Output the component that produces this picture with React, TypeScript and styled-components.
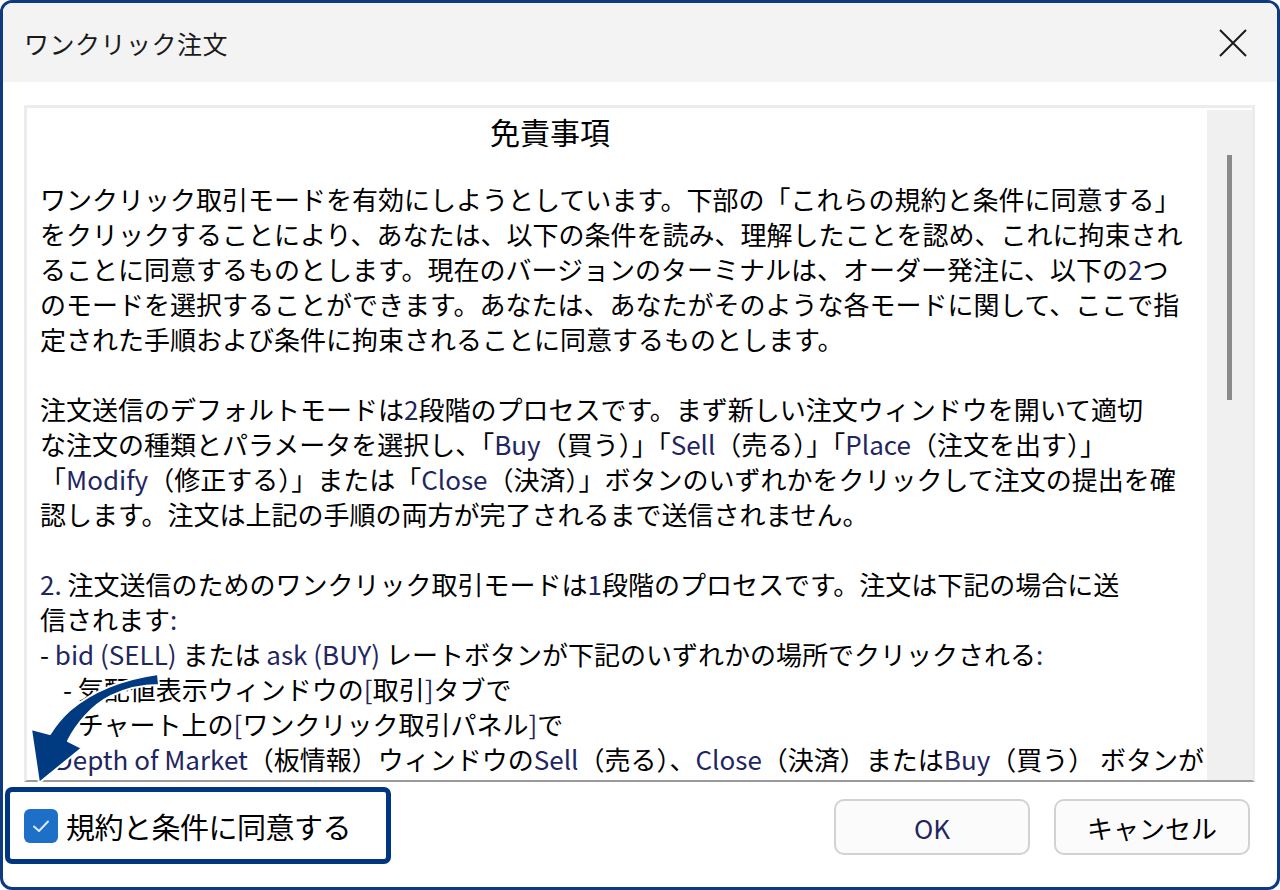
import React from "react";
import styled, { createGlobalStyle } from "styled-components";

const Global = createGlobalStyle`
  html, body { margin: 0; padding: 0; background: #ffffff; }
  body { font-family: "Noto Sans CJK JP", "Noto Sans", sans-serif; }
  * { box-sizing: border-box; }
`;

const Page = styled.div`
  position: relative;
  width: 1280px;
  height: 890px;
`;

const Window = styled.div`
  width: 1280px;
  height: 890px;
  border: 3px solid #0d3a80;
  border-radius: 12px;
  overflow: hidden;
  background: #ffffff;
  display: flex;
  flex-direction: column;
`;

const TitleBar = styled.div`
  height: 79px;
  flex: none;
  background: #f3f3f3;
  display: flex;
  align-items: center;
  justify-content: space-between;
  padding: 0 28px 0 21px;
`;

const Title = styled.div`
  font-family: "Noto Sans CJK JP", sans-serif;
  font-size: 25px;
  color: #1a1a1a;
  letter-spacing: 0.5px;
`;

const CloseButton = styled.div`
  width: 32px;
  height: 32px;
  display: flex;
  align-items: center;
  justify-content: center;
`;

const TextBox = styled.div`
  flex: none;
  margin: 23px 22px 0 21px;
  height: 677px;
  border-top: 3px solid #ececec;
  border-left: 3px solid #ececec;
  border-right: 3px solid #ececec;
  border-bottom: 2px solid #9a9a9a;
  display: flex;
  overflow: hidden;
`;

const TextArea = styled.div`
  flex: 1;
  overflow: hidden;
  padding: 6px 0 0 13px;
  font-family: "Noto Sans CJK JP", sans-serif;
  font-size: 26px;
  line-height: 35px;
  color: #000000;
`;

const Heading = styled.div`
  padding-left: 450px;
  margin-bottom: 32px;
  white-space: nowrap;
  font-size: 30px;
`;

const Line = styled.div<{ $indent?: number }>`
  white-space: nowrap;
  height: 35px;
  padding-left: ${(p) => p.$indent ?? 0}px;
`;

const Blank = styled.div`
  height: 35px;
`;

const Latin = styled.span`
  color: #1f2660;
`;

const ScrollBar = styled.div`
  width: 45px;
  flex: none;
  margin-top: 2px;
  background: #f0f0f0;
  display: flex;
  justify-content: center;
  padding-top: 45px;
`;

const Thumb = styled.div`
  width: 5px;
  height: 245px;
  background: #8a8a8a;
`;

const Footer = styled.div`
  flex: 1;
  display: flex;
  align-items: flex-start;
  padding: 5px 27px 0 2px;
`;

const AgreeBox = styled.div`
  width: 386px;
  height: 77px;
  border: 5px solid #003580;
  border-radius: 7px;
  display: flex;
  align-items: center;
  padding-left: 14px;
  gap: 8px;
`;

const Check = styled.div`
  width: 34px;
  height: 34px;
  border-radius: 6px;
  background: #1d6fc7;
  display: flex;
  align-items: center;
  justify-content: center;
`;

const AgreeLabel = styled.div`
  font-family: "Noto Sans CJK JP", sans-serif;
  font-size: 29px;
  line-height: 36px;
  color: #000000;
  white-space: nowrap;
  letter-spacing: -0.5px;
`;

const Buttons = styled.div`
  margin-left: auto;
  margin-top: 12px;
  display: flex;
  gap: 24px;
`;

const Button = styled.div<{ $w: number }>`
  width: ${(p) => p.$w}px;
  height: 56px;
  border: 2px solid #d2d2d2;
  border-radius: 10px;
  background: #fbfbfb;
  display: flex;
  align-items: center;
  justify-content: center;
  font-family: "Noto Sans CJK JP", sans-serif;
  font-size: 26px;
  color: #000000;
`;

const ArrowSvg = styled.svg`
  position: absolute;
  left: 0;
  top: 660px;
  width: 180px;
  height: 140px;
  pointer-events: none;
`;

const LATIN_RE = /([A-Za-z0-9.:\[\]()]+(?: [A-Za-z0-9.:\[\]()]+)*)/;

function T({ s }: { s: string }) {
  const parts = s.split(LATIN_RE);
  return (
    <>
      {parts.map((p, i) =>
        i % 2 === 1 ? <Latin key={i}>{p}</Latin> : <React.Fragment key={i}>{p}</React.Fragment>
      )}
    </>
  );
}

type L = { t: string; indent?: number } | null;

const lines: L[] = [
  { t: "ワンクリック取引モードを有効にしようとしています。下部の「これらの規約と条件に同意する」" },
  { t: "をクリックすることにより、あなたは、以下の条件を読み、理解したことを認め、これに拘束され" },
  { t: "ることに同意するものとします。現在のバージョンのターミナルは、オーダー発注に、以下の2つ" },
  { t: "のモードを選択することができます。あなたは、あなたがそのような各モードに関して、ここで指" },
  { t: "定された手順および条件に拘束されることに同意するものとします。" },
  null,
  { t: "注文送信のデフォルトモードは2段階のプロセスです。まず新しい注文ウィンドウを開いて適切" },
  { t: "な注文の種類とパラメータを選択し、「Buy（買う）」「Sell（売る）」「Place（注文を出す）」" },
  { t: "「Modify（修正する）」または「Close（決済）」ボタンのいずれかをクリックして注文の提出を確" },
  { t: "認します。注文は上記の手順の両方が完了されるまで送信されません。" },
  null,
  { t: "2. 注文送信のためのワンクリック取引モードは1段階のプロセスです。注文は下記の場合に送" },
  { t: "信されます:" },
  { t: "- bid (SELL) または ask (BUY) レートボタンが下記のいずれかの場所でクリックされる:" },
  { t: "- 気配値表示ウィンドウの[取引]タブで", indent: 23 },
  { t: "- チャート上の[ワンクリック取引パネル]で", indent: 23 },
  { t: "- Depth of Market（板情報）ウィンドウのSell（売る）、Close（決済）またはBuy（買う） ボタンが" },
];

export default function App() {
  return (
    <>
      <Global />
      <Page>
        <Window>
          <TitleBar>
            <Title>ワンクリック注文</Title>
            <CloseButton>
              <svg width="30" height="30" viewBox="0 0 30 30">
                <path d="M2 2 L28 28 M28 2 L2 28" stroke="#1a1a1a" strokeWidth="2" fill="none" />
              </svg>
            </CloseButton>
          </TitleBar>
          <TextBox>
            <TextArea>
              <Heading>免責事項</Heading>
              {lines.map((l, i) =>
                l ? (
                  <Line key={i} $indent={l.indent}>
                    <T s={l.t} />
                  </Line>
                ) : (
                  <Blank key={i} />
                )
              )}
            </TextArea>
            <ScrollBar>
              <Thumb />
            </ScrollBar>
          </TextBox>
          <Footer>
            <AgreeBox>
              <Check>
                <svg width="20" height="16" viewBox="0 0 20 16">
                  <path d="M3 8.5 L8 13 L17 3.5" stroke="#dbe8f8" strokeWidth="2" fill="none" strokeLinecap="round" strokeLinejoin="round" />
                </svg>
              </Check>
              <AgreeLabel>規約と条件に同意する</AgreeLabel>
            </AgreeBox>
            <Buttons>
              <Button $w={196}>
                <Latin>OK</Latin>
              </Button>
              <Button $w={196}>キャンセル</Button>
            </Buttons>
          </Footer>
        </Window>
        <ArrowSvg viewBox="0 660 180 140">
          <path
            d="M158,674 C130,678 96,688 70,710 C61,718 55,726 50,734 L31,729 L39,783 L82,748 L68,741 C76,725 91,706 111,696 C127,688 142,685 159,685 Z"
            fill="#003a80"
            stroke="#ffffff"
            strokeWidth="2"
            strokeLinejoin="round"
          />
        </ArrowSvg>
      </Page>
    </>
  );
}
